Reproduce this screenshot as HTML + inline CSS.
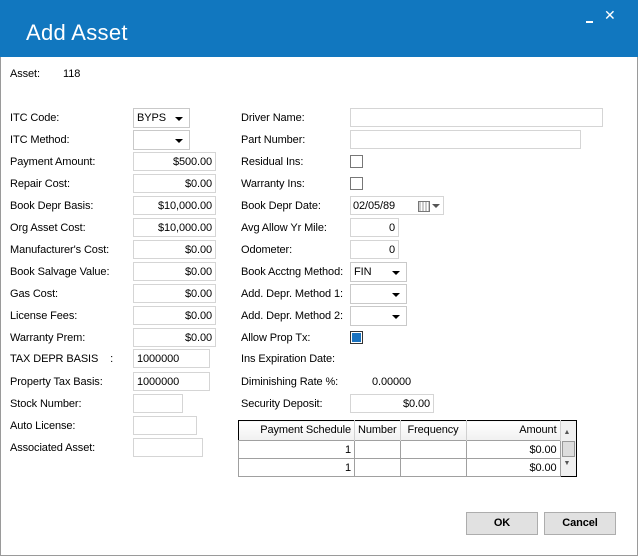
<!DOCTYPE html><html><head><style>
body{margin:0;width:638px;height:557px;overflow:hidden;background:#fff;font-family:"Liberation Sans",sans-serif;font-size:11px;letter-spacing:-0.1px;color:#000;position:relative}
#win{position:absolute;left:0;top:0;width:636px;height:555px;border:1px solid #9a9a9a;border-top:none}
#tb{position:absolute;left:0;top:0;width:638px;height:57px;background:#1177bf;color:#fff}
.a{position:absolute;white-space:nowrap}
.l{position:absolute;white-space:nowrap;line-height:14px}
.i{position:absolute;height:19px;border:1px solid #d5d5d5;box-sizing:border-box;background:#fff;text-align:right;padding-right:3px;line-height:18px}
.d{position:absolute;height:20px;border:1px solid #c9c9c9;box-sizing:border-box;background:#fff;line-height:18px;padding-left:3px}
.d:after{content:"";position:absolute;right:6px;top:8px;border-left:4px solid transparent;border-right:4px solid transparent;border-top:4px solid #000}
.c{position:absolute;width:13px;height:13px;border:1px solid #777;box-sizing:border-box;background:#fff}
.btn{position:absolute;top:512px;width:72px;height:23px;background:#e1e1e1;border:1px solid #adadad;box-sizing:border-box;text-align:center;line-height:21px;font-weight:bold}
table{border-collapse:collapse;position:absolute;left:238px;top:420px;border:1px solid #000}
td{border:1px solid #a0a0a0;height:17px;padding:0 3px;text-align:right;line-height:16px}
th{font-weight:normal;height:19px;padding:0 3px;border-right:1px solid #d0d0d0;background:linear-gradient(#fff,#f0f0f0);line-height:19px}
</style></head><body><div id="win"></div>
<div id="tb"><div class="a" style="left:26px;top:20px;font-size:22px;letter-spacing:0.3px">Add Asset</div>
<div class="a" style="left:586px;top:21px;width:7px;height:2px;background:#fff"></div>
<div class="a" style="left:604px;top:7px;font-size:14px">✕</div></div>
<div class="l" style="left:10px;top:67px">Asset:</div><div class="l" style="left:63px;top:67px">118</div>

<div class="l" style="left:10px;top:111px">ITC Code:</div>
<div class="l" style="left:10px;top:133px">ITC Method:</div>
<div class="l" style="left:10px;top:155px">Payment Amount:</div>
<div class="l" style="left:10px;top:177px">Repair Cost:</div>
<div class="l" style="left:10px;top:199px">Book Depr Basis:</div>
<div class="l" style="left:10px;top:221px">Org Asset Cost:</div>
<div class="l" style="left:10px;top:243px">Manufacturer's Cost:</div>
<div class="l" style="left:10px;top:265px">Book Salvage Value:</div>
<div class="l" style="left:10px;top:287px">Gas Cost:</div>
<div class="l" style="left:10px;top:309px">License Fees:</div>
<div class="l" style="left:10px;top:331px">Warranty Prem:</div>
<div class="l" style="left:10px;top:352px">TAX DEPR BASIS &nbsp;&nbsp;&nbsp;:</div>
<div class="l" style="left:10px;top:375px">Property Tax Basis:</div>
<div class="l" style="left:10px;top:397px">Stock Number:</div>
<div class="l" style="left:10px;top:419px">Auto License:</div>
<div class="l" style="left:10px;top:441px">Associated Asset:</div>

<div class="d" style="left:133px;top:108px;width:57px">BYPS</div>
<div class="d" style="left:133px;top:130px;width:57px"></div>
<div class="i" style="left:133px;top:152px;width:83px">$500.00</div>
<div class="i" style="left:133px;top:174px;width:83px">$0.00</div>
<div class="i" style="left:133px;top:196px;width:83px">$10,000.00</div>
<div class="i" style="left:133px;top:218px;width:83px">$10,000.00</div>
<div class="i" style="left:133px;top:240px;width:83px">$0.00</div>
<div class="i" style="left:133px;top:262px;width:83px">$0.00</div>
<div class="i" style="left:133px;top:284px;width:83px">$0.00</div>
<div class="i" style="left:133px;top:306px;width:83px">$0.00</div>
<div class="i" style="left:133px;top:328px;width:83px">$0.00</div>
<div class="i" style="left:133px;top:349px;width:77px;text-align:left;padding-left:3px">1000000</div>
<div class="i" style="left:133px;top:372px;width:77px;text-align:left;padding-left:3px">1000000</div>
<div class="i" style="left:133px;top:394px;width:50px"></div>
<div class="i" style="left:133px;top:416px;width:64px"></div>
<div class="i" style="left:133px;top:438px;width:70px"></div>

<div class="l" style="left:241px;top:111px">Driver Name:</div>
<div class="l" style="left:241px;top:133px">Part Number:</div>
<div class="l" style="left:241px;top:155px">Residual Ins:</div>
<div class="l" style="left:241px;top:177px">Warranty Ins:</div>
<div class="l" style="left:241px;top:199px">Book Depr Date:</div>
<div class="l" style="left:241px;top:221px">Avg Allow Yr Mile:</div>
<div class="l" style="left:241px;top:243px">Odometer:</div>
<div class="l" style="left:241px;top:265px">Book Acctng Method:</div>
<div class="l" style="left:241px;top:287px">Add. Depr. Method 1:</div>
<div class="l" style="left:241px;top:309px">Add. Depr. Method 2:</div>
<div class="l" style="left:241px;top:331px">Allow Prop Tx:</div>
<div class="l" style="left:241px;top:352px">Ins Expiration Date:</div>
<div class="l" style="left:241px;top:375px">Diminishing Rate %:</div>
<div class="l" style="left:372px;top:375px">0.00000</div>
<div class="l" style="left:241px;top:397px">Security Deposit:</div>

<div class="i" style="left:350px;top:108px;width:253px"></div>
<div class="i" style="left:350px;top:130px;width:231px"></div>
<div class="c" style="left:350px;top:155px"></div>
<div class="c" style="left:350px;top:177px"></div>
<div class="i" style="left:350px;top:196px;width:94px;text-align:left;padding-left:2px">02/05/89<span style="position:absolute;left:67px;top:4px;width:10px;height:9px;border:1px solid #777;background:repeating-linear-gradient(90deg,#ccc 0 2px,#fff 2px 3px)"></span><span style="position:absolute;left:81px;top:7px;border-left:4px solid transparent;border-right:4px solid transparent;border-top:4px solid #555"></span></div>
<div class="i" style="left:350px;top:218px;width:49px">0</div>
<div class="i" style="left:350px;top:240px;width:49px">0</div>
<div class="d" style="left:350px;top:262px;width:57px">FIN</div>
<div class="d" style="left:350px;top:284px;width:57px"></div>
<div class="d" style="left:350px;top:306px;width:57px"></div>
<div class="c" style="left:350px;top:331px;border-color:#333;background:#1a73c0;box-shadow:inset 0 0 0 1px #fff"></div>
<div class="i" style="left:350px;top:394px;width:84px">$0.00</div>

<table><tr><th style="width:109px;text-align:right">Payment Schedule</th><th style="width:38px">Number</th><th style="width:59px">Frequency</th><th style="width:87px;text-align:right">Amount</th><th rowspan="3" style="width:15px;background:#f0f0f0;border:none;padding:0;position:relative"><div style="position:absolute;top:2px;left:3px;font-size:7px;color:#555">▲</div><div style="position:absolute;top:20px;left:1px;width:13px;height:16px;background:#ddd;border:1px solid #999;box-sizing:border-box"></div><div style="position:absolute;bottom:3px;left:3px;font-size:7px;color:#555">▼</div></th></tr>
<tr><td>1</td><td></td><td></td><td>$0.00</td></tr>
<tr><td>1</td><td></td><td></td><td>$0.00</td></tr></table>

<div class="btn" style="left:466px">OK</div>
<div class="btn" style="left:544px">Cancel</div>
</body></html>
